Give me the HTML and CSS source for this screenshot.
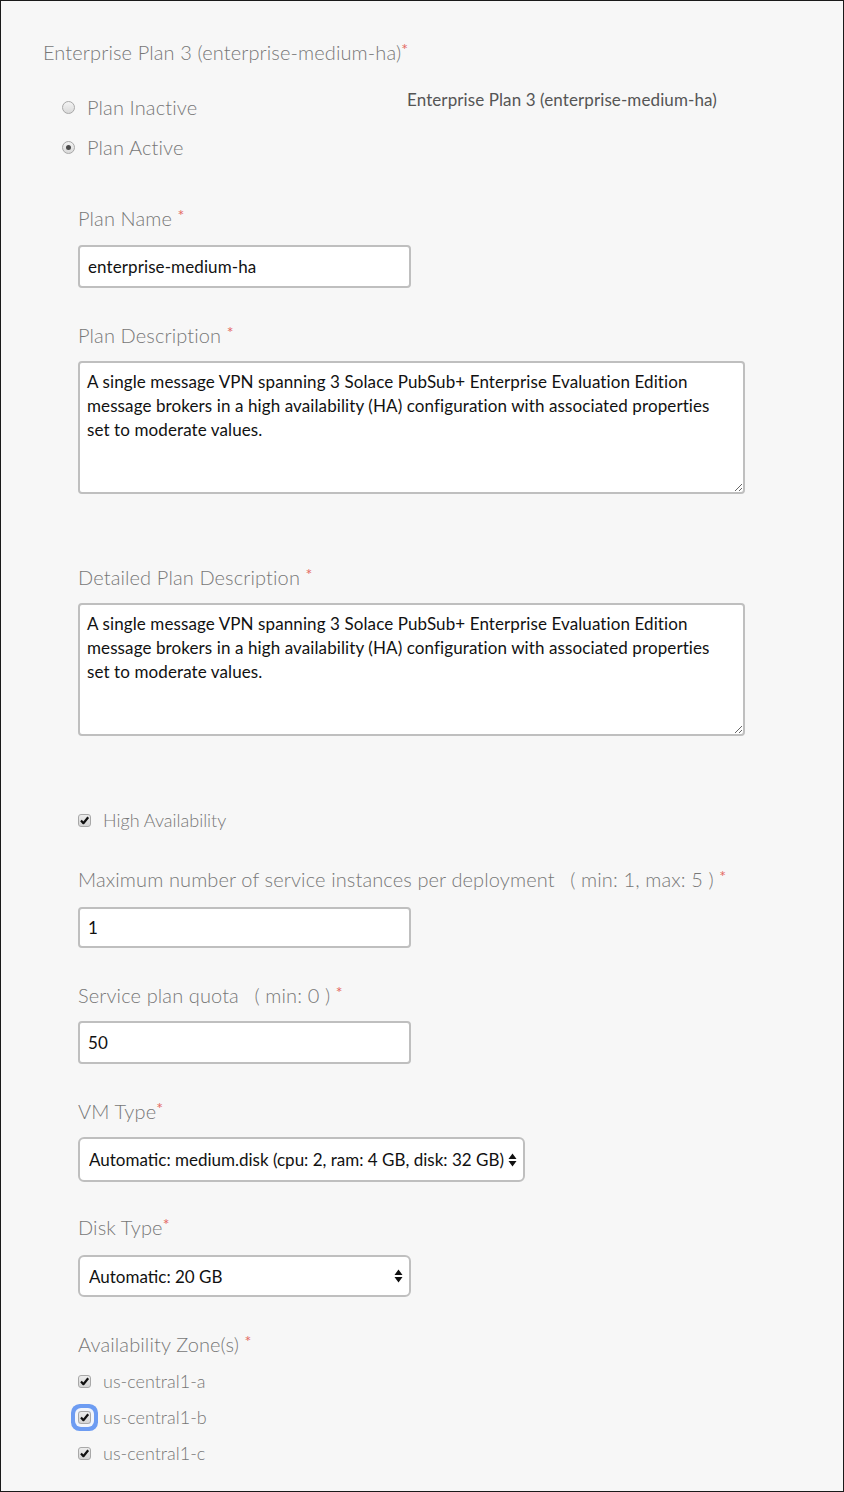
FILE: index.html
```html
<!DOCTYPE html>
<html>
<head>
    <title>Enterprise Plan 3</title>
    <link rel="stylesheet" href="styles.css">
</head>
<body>
    <div class="page">
        <div class="plan-title">Enterprise Plan 3 (enterprise-medium-ha)<span class="req">*</span></div>

        <div class="status-row">
            <div class="radios">
                <label class="radio"><span class="dot"></span>Plan Inactive</label>
                <label class="radio"><span class="dot on"></span>Plan Active</label>
            </div>
            <div class="plan-display">Enterprise Plan 3 (enterprise-medium-ha)</div>
        </div>

        <div class="fields">
            <div class="field first">
                <label class="label">Plan Name <span class="req">*</span></label>
                <input type="text" class="text-input" value="enterprise-medium-ha">
            </div>

            <div class="field">
                <label class="label">Plan Description <span class="req">*</span></label>
                <textarea class="text-area">A single message VPN spanning 3 Solace PubSub+ Enterprise Evaluation Edition message brokers in a high availability (HA) configuration with associated properties set to moderate values.</textarea>
            </div>

            <div class="field far">
                <label class="label">Detailed Plan Description <span class="req">*</span></label>
                <textarea class="text-area">A single message VPN spanning 3 Solace PubSub+ Enterprise Evaluation Edition message brokers in a high availability (HA) configuration with associated properties set to moderate values.</textarea>
            </div>

            <label class="check ha">
                <span class="box"><svg width="11" height="11" viewBox="0 0 11 11"><path d="M2 5.6 L4.4 8.2 L9.2 2.2" fill="none" stroke="#111" stroke-width="2.2" stroke-linejoin="round"/></svg></span>High Availability
            </label>

            <div class="field loose">
                <label class="label">Maximum number of service instances per deployment <span class="hint">( min: 1, max: 5 )</span> <span class="req">*</span></label>
                <input type="text" class="text-input short" value="1">
            </div>

            <div class="field">
                <label class="label">Service plan quota <span class="hint">( min: 0 )</span> <span class="req">*</span></label>
                <input type="text" class="text-input" value="50">
            </div>

            <div class="field">
                <label class="label">VM Type<span class="req">*</span></label>
                <div class="select-wrap wide">
                    <select class="select tall">
                        <option>Automatic: medium.disk (cpu: 2, ram: 4 GB, disk: 32 GB)</option>
                    </select>
                    <svg class="arrows" width="9" height="16" viewBox="0 0 9 16"><path d="M4.5 1.5 L8.5 7 H0.5 Z M4.5 14.5 L8.5 9 H0.5 Z" fill="#111"/></svg>
                </div>
            </div>

            <div class="field loose near">
                <label class="label">Disk Type<span class="req">*</span></label>
                <div class="select-wrap">
                    <select class="select">
                        <option>Automatic: 20 GB</option>
                    </select>
                    <svg class="arrows" width="9" height="16" viewBox="0 0 9 16"><path d="M4.5 1.5 L8.5 7 H0.5 Z M4.5 14.5 L8.5 9 H0.5 Z" fill="#111"/></svg>
                </div>
            </div>

            <div class="field tight">
                <label class="label">Availability Zone(s) <span class="req">*</span></label>
                <div class="zones">
                    <label class="check">
                        <span class="box"><svg width="11" height="11" viewBox="0 0 11 11"><path d="M2 5.6 L4.4 8.2 L9.2 2.2" fill="none" stroke="#111" stroke-width="2.2" stroke-linejoin="round"/></svg></span>us-central1-a
                    </label>
                    <label class="check">
                        <span class="box focused"><svg width="11" height="11" viewBox="0 0 11 11"><path d="M2 5.6 L4.4 8.2 L9.2 2.2" fill="none" stroke="#111" stroke-width="2.2" stroke-linejoin="round"/></svg></span>us-central1-b
                    </label>
                    <label class="check">
                        <span class="box"><svg width="11" height="11" viewBox="0 0 11 11"><path d="M2 5.6 L4.4 8.2 L9.2 2.2" fill="none" stroke="#111" stroke-width="2.2" stroke-linejoin="round"/></svg></span>us-central1-c
                    </label>
                </div>
            </div>
        </div>
    </div>
</body>
</html>
```

FILE: styles.css
```css
/* halaman */
body {
    margin: 0;
    padding: 0;
    font-family: "Lato", "Liberation Sans", sans-serif;
}

.page {
    box-sizing: border-box;
    width: 844px;
    height: 1492px;
    border: 1px solid #1a1a1a;
    background: #f7f7f7;
    padding: 39px 0 0 42px;
}

/* judul plan */
.plan-title {
    font-size: 20px;
    font-weight: 300;
    letter-spacing: 0.12px;
    line-height: 24px;
    color: #777;
}

.req {
    color: #e46a62;
    font-size: 16px;
    font-weight: 400;
    vertical-align: top;
    line-height: 18px;
}

/* baris status aktif / tidak aktif */
.status-row {
    display: flex;
    margin-top: 31px;
    padding-left: 19px;
}

.radios {
    width: 345px;
    display: flex;
    flex-direction: column;
    gap: 16px;
}

.radio {
    display: flex;
    align-items: center;
    gap: 12px;
    font-size: 20px;
    font-weight: 300;
    letter-spacing: 0.12px;
    line-height: 24px;
    color: #777;
}

.dot {
    box-sizing: border-box;
    width: 13px;
    height: 13px;
    border: 1px solid #a8a8a8;
    border-radius: 50%;
    background: linear-gradient(#f4f4f4, #d9d9d9);
    display: flex;
    align-items: center;
    justify-content: center;
}

.dot.on::after {
    content: "";
    width: 5px;
    height: 5px;
    border-radius: 50%;
    background: #4a4a4a;
}

.plan-display {
    font-size: 17px;
    letter-spacing: 0.1px;
    line-height: 20px;
    color: #555;
    margin-top: -5px;
}

/* daftar field */
.fields {
    padding-left: 35px;
    margin-top: 47px;
    display: flex;
    flex-direction: column;
    align-items: flex-start;
}

.field {
    display: flex;
    flex-direction: column;
    align-items: flex-start;
    gap: 14px;
    margin-top: 35px;
}

.field.first {
    margin-top: 0;
    gap: 15px;
}

.field.far {
    margin-top: 71px;
}

.field.loose {
    gap: 16px;
}

.field.near {
    margin-top: 33px;
}

.label {
    font-size: 20px;
    font-weight: 300;
    letter-spacing: 0.12px;
    line-height: 24px;
    color: #777;
}

.hint {
    margin-left: 10px;
}

.text-input {
    box-sizing: border-box;
    width: 333px;
    height: 43px;
    margin: 0;
    border: 2px solid #bfbfbf;
    border-radius: 4px;
    background: #fff;
    padding: 0 8px;
    font-family: inherit;
    font-size: 17px;
    letter-spacing: 0.1px;
    color: #111;
}

.text-input.short {
    height: 41px;
}

.text-area {
    box-sizing: border-box;
    width: 667px;
    height: 133px;
    margin: 0;
    border: 2px solid #bfbfbf;
    border-radius: 4px;
    background: #fff;
    padding: 7px 7px;
    font-family: inherit;
    font-size: 17px;
    letter-spacing: 0.1px;
    line-height: 24px;
    color: #111;
    resize: both;
}

/* select dengan panah */
.select-wrap {
    position: relative;
    width: 333px;
}

.select-wrap.wide {
    width: 447px;
}

.select {
    appearance: none;
    -webkit-appearance: none;
    box-sizing: border-box;
    width: 100%;
    height: 42px;
    margin: 0;
    border: 2px solid #bfbfbf;
    border-radius: 6px;
    background: #fff;
    padding: 0 18px 0 9px;
    font-family: inherit;
    font-size: 17px;
    color: #111;
}

.select.tall {
    height: 45px;
}

.arrows {
    position: absolute;
    right: 8px;
    top: 50%;
    margin-top: -8px;
    pointer-events: none;
}

/* checkbox */
.check {
    display: flex;
    align-items: center;
    gap: 12px;
    font-size: 18px;
    font-weight: 300;
    line-height: 24px;
    color: #777;
}

.check.ha {
    margin-top: 72px;
}

.box {
    box-sizing: border-box;
    width: 13px;
    height: 13px;
    border: 1px solid #a8a8a8;
    border-radius: 3px;
    background: linear-gradient(#ececec, #d4d4d4);
    display: flex;
    align-items: center;
    justify-content: center;
}

.box.focused {
    box-shadow: 0 0 0 3px #f2f5fb, 0 0 0 7px #6d9cf2;
    border-radius: 3px;
}

.field.tight {
    gap: 13px;
}

.zones {
    display: flex;
    flex-direction: column;
    gap: 12px;
}
```
